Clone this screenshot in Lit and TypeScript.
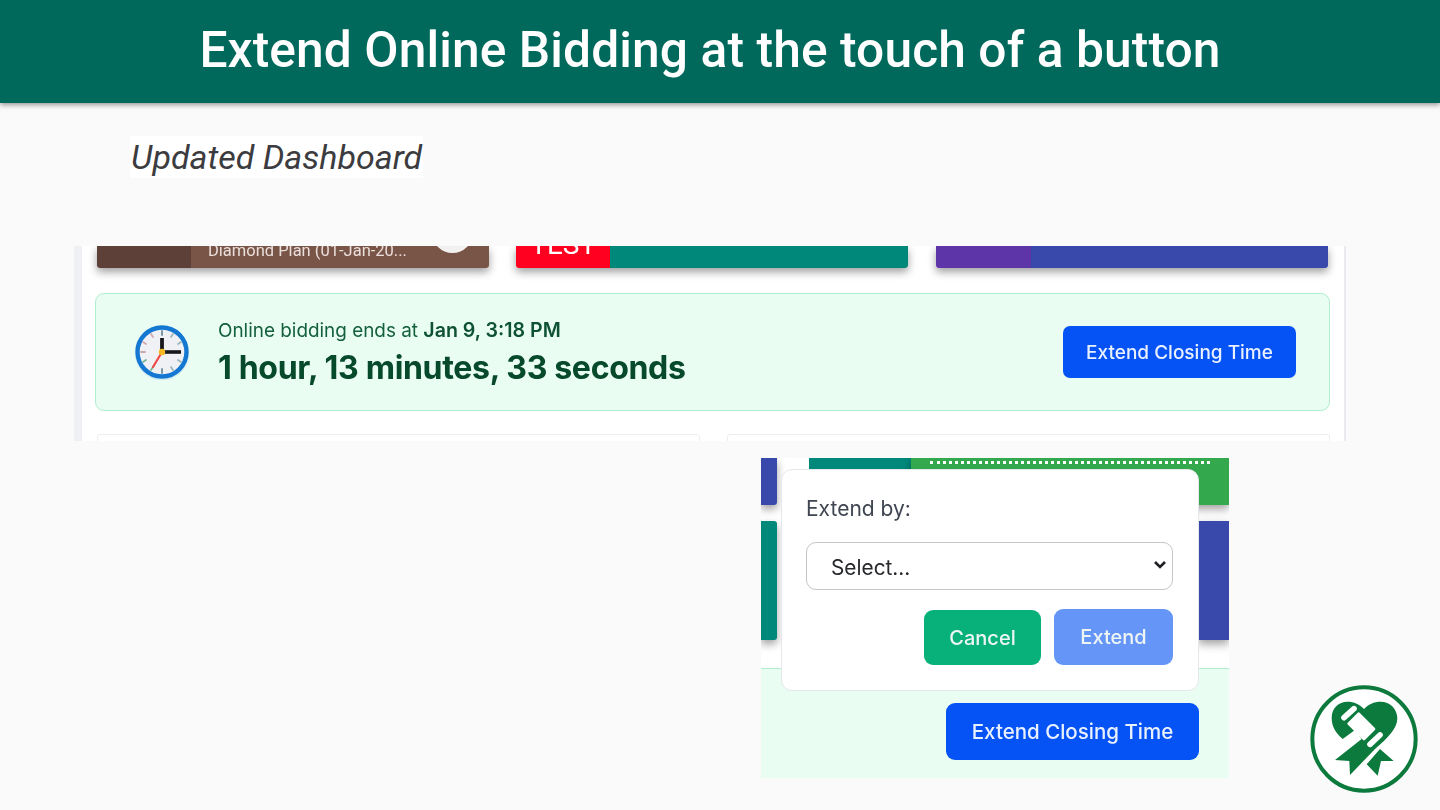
import { LitElement, html, css } from "lit";
import { customElement } from "lit/decorators.js";

@customElement("app-root")
export class AppRoot extends LitElement {
  static styles = css`
    :host { display: block; width: 1440px; height: 810px; background: #fafafa; overflow: hidden; font-family: Roboto, sans-serif; }
    .header { height: 103px; background: #00695c; box-shadow: 0 2px 5px rgba(0,0,0,.4); display: flex; align-items: center; justify-content: center; position: relative; }
    .header h1 { margin: 0 20px 0 0; color: #fff; font: 500 49.7px/1 Roboto, sans-serif; padding-bottom: 1px; letter-spacing: 0.1px; }
    .sub { height: 143px; padding: 33px 0 0 130px; box-sizing: border-box; }
    .sub span { display: inline-block; height: 42px; background: #fff; padding: 0 1px; box-sizing: border-box; color: #3c3c40; font: italic 400 34px/42px Roboto, sans-serif; }

    .shot1 { margin-left: 74px; width: 1272px; height: 195px; background: #fff; border-left: 8px solid #eef0f3; border-right: 2px solid #e9ebee; box-sizing: border-box; padding-right: 3px; overflow: hidden; font-family: Inter, sans-serif; filter: blur(.4px); }
    .cards { display: grid; grid-template-columns: 392px 392px 392px; column-gap: 27.25px; height: 22px; margin-left: 15px; }
    .card { display: flex; height: 22px; border-radius: 0 0 3px 3px; box-shadow: 0 4px 9px rgba(0,0,0,.38); position: relative; overflow: hidden; }
    .swatch { width: 94px; flex: none; }
    .body { flex: 1; }
    .brown .swatch { background: #5d4037; }
    .brown .body { background: #795548; color: #eadfdb; font: 400 16.5px/18px Roboto, sans-serif; padding: 0 0 0 17px; white-space: nowrap; overflow: hidden; }
    .brown .body span { display: block; margin-top: -4px; }
    .knob { position: absolute; left: 335px; top: -34px; width: 41px; height: 41px; border-radius: 50%; background: #f3f1f0; }
    .red .swatch { background: #ff0021; color: #fff; font: 400 28px/24px Roboto, sans-serif; padding-left: 14px; box-sizing: border-box; overflow: hidden; }
    .red .swatch span { display: block; margin-top: -13px; }
    .red .body { background: #00897b; }
    .indigo .swatch { background: #5e35a8; width: 95px; }
    .indigo .body { background: #3949ab; }

    .banner { margin: 25px 0 0 13px; width: 1235px; height: 118px; box-sizing: border-box; background: #e9fdf3; border: 1.5px solid #b0eecd; border-radius: 9px; display: flex; align-items: center; padding: 0 33px 0 38px; }
    .clock { width: 56px; height: 56px; flex: none; margin-right: 28px; filter: blur(.4px); }
    .info { flex: 1; color: #14603c; }
    .ends { font: 400 18.9px/22px Inter, sans-serif; margin-top: 1px; }
    .ends b { font-weight: 600; font-size: 19.6px; color: #0e5233; }
    .left { font: 700 32.1px/38px Inter, sans-serif; color: #06492b; letter-spacing: -0.35px; margin-top: 7px; }
    .btn { border: none; background: #0552f5; color: #e9f1ff; font: 500 19px/1 Inter, sans-serif; border-radius: 7px; width: 233px; height: 52px; padding: 0; }
    .lower { display: grid; grid-template-columns: 603px 603px; column-gap: 27px; margin: 23px 0 0 15px; }
    .lower div { height: 20px; border: 1px solid #eceef0; border-radius: 3px; box-sizing: border-box; }

    .row { display: flex; align-items: flex-start; margin-top: 17px; padding-left: 761px; }
    .shot2 { width: 468px; height: 320px; flex: none; background: #fff; position: relative; overflow: hidden; font-family: Inter, sans-serif; filter: blur(.4px); }
    .s2-top { display: flex; height: 47px; }
    .s2-a { width: 16px; background: #3949ab; box-shadow: 0 4px 9px rgba(0,0,0,.38); border-radius: 0 0 3px 0; }
    .s2-b { margin-left: 32px; width: 102px; background: #00897b; }
    .s2-c { flex: 1; background: #34a84c; padding: 3px 19px 0 19px; box-sizing: border-box; box-shadow: 0 4px 9px rgba(0,0,0,.38); }
    .dots { height: 3px; border-top: 3px dotted #fff; }
    .s2-mid { display: flex; justify-content: space-between; height: 119px; margin-top: 16px; }
    .s2-t { width: 16px; background: #00897b; border-radius: 0 3px 3px 0; box-shadow: 0 4px 9px rgba(0,0,0,.38); }
    .s2-i { width: 31px; background: #3949ab; box-shadow: 0 4px 9px rgba(0,0,0,.38); }
    .s2-banner { margin-top: 28px; height: 110px; background: #e9fdf3; border-top: 1.5px solid #b0eecd; box-sizing: border-box; display: flex; justify-content: flex-end; padding: 34px 30px 0 0; }
    .s2-btn { border: none; background: #0552f5; color: #e9f1ff; font: 500 20.5px/1 Inter, sans-serif; border-radius: 9px; width: 253px; height: 57px; padding: 2px 0 0; }
    .pop { position: absolute; left: 20px; top: 11px; width: 418px; height: 222px; box-sizing: border-box; background: #fff; border: 1px solid #e5e7eb; border-radius: 11px; padding: 26px 24px 0 24px; }
    .pop label { display: block; font: 400 21px/26px Inter, sans-serif; color: #3f4652; }
    .field { position: relative; margin-top: 20px; width: 367px; height: 48px; }
    .field select { display: block; appearance: none; -webkit-appearance: none; width: 100%; height: 100%; box-sizing: border-box; background: #fff; border: 1.5px solid #c4c6c9; border-radius: 10px; padding: 2px 0 0 24px; font: 400 20.8px Inter, sans-serif; color: #26282c; }
    .chev { position: absolute; right: 6px; top: 17px; width: 14px; height: 12px; pointer-events: none; }
    .acts { display: flex; justify-content: flex-end; gap: 13px; margin: 19px 1px 0 0; }
    .acts button { border: none; height: 56px; border-radius: 9px; color: #eef6f4; font: 500 20px/1 Inter, sans-serif; padding: 0; }
    .cancel { width: 117px; background: #08b17a; margin-top: 1px; height: 55px !important; }
    .extend { width: 119px; background: #6596f7; }
    .logo { width: 108px; height: 108px; margin: 227px 0 0 81px; flex: none; display: block; }
  `;

  render() {
    return html`
      <div class="header"><h1>Extend Online Bidding at the touch of a button</h1></div>
      <div class="sub"><span>Updated Dashboard</span></div>
      <section class="shot1">
        <div class="cards">
          <div class="card brown">
            <div class="swatch"></div>
            <div class="body"><span>Diamond Plan (01-Jan-20...</span></div>
            <div class="knob"></div>
          </div>
          <div class="card red"><div class="swatch"><span>TEST</span></div><div class="body"></div></div>
          <div class="card indigo"><div class="swatch"></div><div class="body"></div></div>
        </div>
        <div class="banner">
          <svg class="clock" viewBox="0 0 56 56">
            <circle cx="28" cy="29.5" r="27" fill="#bcd9ee" opacity=".45"/>
            <circle cx="28" cy="28" r="24.5" fill="#f0f1f4" stroke="#1478d2" stroke-width="4.4"/>
            <g stroke-width="1.8" stroke-linecap="round">
              <path d="M28 7v4M28 45v4" stroke="#6b8f9c"/>
              <path d="M7 28h4" stroke="#c9a8a8"/>
              <path d="M39 10l-2 3M47 18l-3 2M47 38l-3-2M39 46l-2-3" stroke="#9fb5bb"/>
              <path d="M17 10l2 3M9 18l3 2" stroke="#d2a9b0"/>
              <path d="M9 38l3-2M17 46l2-3" stroke="#72b79a"/>
            </g>
            <path d="M28 28L19 43" stroke="#ef4a4a" stroke-width="2.2" stroke-linecap="round"/>
            <path d="M28 28V14" stroke="#17181c" stroke-width="3.8"/>
            <path d="M28 28H47" stroke="#17181c" stroke-width="3.6"/>
            <circle cx="28" cy="28" r="3.2" fill="#f5b921"/>
          </svg>
          <div class="info">
            <div class="ends">Online bidding ends at <b>Jan 9, 3:18 PM</b></div>
            <div class="left">1 hour, 13 minutes, 33 seconds</div>
          </div>
          <button class="btn">Extend Closing Time</button>
        </div>
        <div class="lower"><div></div><div></div></div>
      </section>
      <div class="row">
        <section class="shot2">
          <div class="s2-top"><div class="s2-a"></div><div class="s2-b"></div><div class="s2-c"><div class="dots"></div></div></div>
          <div class="s2-mid"><div class="s2-t"></div><div class="s2-i"></div></div>
          <div class="s2-banner"><button class="s2-btn">Extend Closing Time</button></div>
          <div class="pop">
            <label>Extend by:</label>
            <div class="field">
              <select><option>Select...</option></select>
              <svg class="chev" viewBox="0 0 14 12"><path d="M2 3l5 5 5-5" fill="none" stroke="#1d1f22" stroke-width="2.6"/></svg>
            </div>
            <div class="acts">
              <button class="cancel">Cancel</button>
              <button class="extend">Extend</button>
            </div>
          </div>
        </section>
        <svg class="logo" viewBox="30 30 324 324">
          <circle cx="192" cy="192" r="155" fill="#fff" stroke="#0b7a3c" stroke-width="12"/>
          <path d="M128 192C105 172 95 152 95 128C95 100 116 80 142 80C162 80 180 88 192 102C204 88 222 80 242 80C270 80 292 102 292 130C292 162 262 190 225 222L150 300L148 258L105 255L185 192L165 165Z" fill="#0b7a3c"/>
          <path d="M240 222L281 258L243 258L233 302L200 268Z" fill="#0b7a3c"/>
          <path d="M146 146L176 116L222 162L192 192Z" fill="#fff" stroke="#fff" stroke-width="8" stroke-linejoin="round"/>
          <path d="M132 128L162 101" stroke="#fff" stroke-width="17" stroke-linecap="round"/>
          <path d="M210 208L240 180" stroke="#fff" stroke-width="17" stroke-linecap="round"/>
        </svg>
      </div>
    `;
  }
}
